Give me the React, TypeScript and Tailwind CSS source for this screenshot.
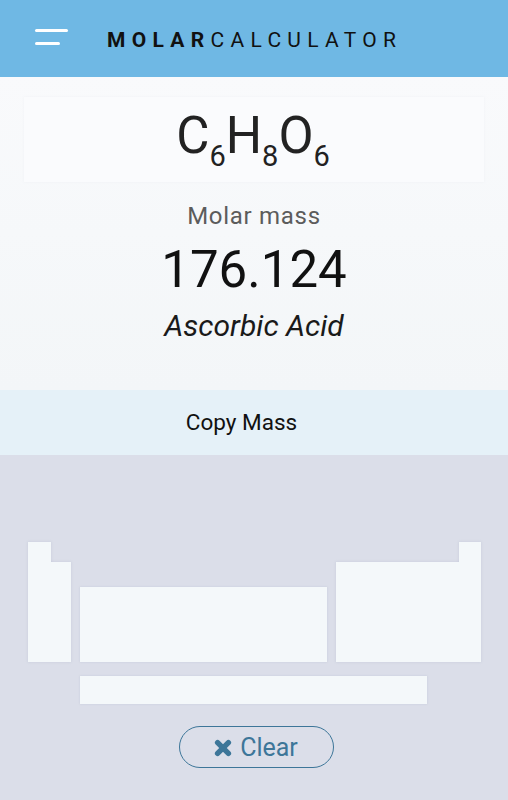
import { useState } from 'react';

const font = { fontFamily: 'Roboto, "Noto Sans", sans-serif' };

function Cell({ className }: { className: string }) {
  return <div className={`bg-[#f4f8fa] ${className}`} />;
}

export default function App() {
  const [formula] = useState([
    { el: 'C', n: '6' },
    { el: 'H', n: '8' },
    { el: 'O', n: '6' },
  ]);

  return (
    <div className="w-[508px] h-[800px] flex flex-col bg-[#dbdee9] overflow-hidden" style={font}>
      {/* Header */}
      <header className="h-[77px] shrink-0 bg-[#6fb8e4] flex items-center pl-[35px]">
        <button className="flex flex-col gap-[10px] w-[33px] mt-[-3px]">
          <span className="block h-[3px] w-[33px] rounded-full bg-white" />
          <span className="block h-[3px] w-[25px] rounded-full bg-white" />
        </button>
        <h1 className="ml-[39px] text-[21px] leading-none tracking-[0.3em] text-[#111] mt-[3px]">
          <span className="font-bold">MOLAR</span>
          <span className="font-normal">CALCULATOR</span>
        </h1>
      </header>

      {/* Result */}
      <section className="h-[313px] shrink-0 bg-gradient-to-b from-[#f9fafc] to-[#f3f6f8] flex flex-col items-center pt-[20px]">
        <div className="w-[460px] h-[85px] bg-[#fafbfd] shadow-[0_0_3px_rgba(215,222,230,0.2)] flex items-center justify-center">
          <div className="text-[51px] leading-none text-[#222] mt-[-8px] ml-[-2px]">
            {formula.map((f) => (
              <span key={f.el + f.n}>
                {f.el}
                <sub className="text-[29px] align-baseline relative top-[13px]">{f.n}</sub>
              </span>
            ))}
          </div>
        </div>
        <div className="mt-[22px] text-[24px] leading-none tracking-[0.03em] text-[#5c5c5c]">Molar mass</div>
        <div className="mt-[16px] text-[51px] leading-none text-[#111]">176.124</div>
        <div className="mt-[16px] text-[30px] leading-none italic text-[#1a1a1a]">Ascorbic Acid</div>
      </section>

      {/* Copy */}
      <button className="h-[65px] shrink-0 bg-[#e5f1f8] text-[22.5px] text-[#111] flex items-center justify-center pr-[25px]">
        Copy Mass
      </button>

      {/* Periodic table */}
      <section className="flex flex-col pt-[87px] pl-[28px]">
        <div className="flex items-end">
          <div className="flex flex-col items-start drop-shadow-[0_0_1.5px_rgba(150,160,185,0.3)]">
            <Cell className="w-[23px] h-[20px]" />
            <Cell className="w-[43px] h-[100px]" />
          </div>
          <Cell className="ml-[9px] w-[247px] h-[75px] shadow-[0_0_2px_rgba(150,160,185,0.3)]" />
          <div className="ml-[9px] flex flex-col items-end drop-shadow-[0_0_1.5px_rgba(150,160,185,0.3)]">
            <Cell className="w-[22px] h-[20px]" />
            <Cell className="w-[145px] h-[100px]" />
          </div>
        </div>
        <Cell className="ml-[52px] mt-[14px] w-[347px] h-[28px] shadow-[0_0_2px_rgba(150,160,185,0.3)]" />
        <div className="flex justify-center pr-[28px] mt-[22px]">
          <button className="ml-[4px] w-[155px] h-[42px] rounded-full border-[1.5px] border-[#3d7699] text-[#3d7699] flex items-center justify-center gap-[8px] text-[25px]">
            <svg width="18" height="18" viewBox="0 0 20 20" className="mt-[1px]">
              <path d="M4 4 L16 16 M16 4 L4 16" stroke="#3d7699" strokeWidth="6" strokeLinecap="round" />
            </svg>
            <span className="leading-none">Clear</span>
          </button>
        </div>
      </section>
    </div>
  );
}
